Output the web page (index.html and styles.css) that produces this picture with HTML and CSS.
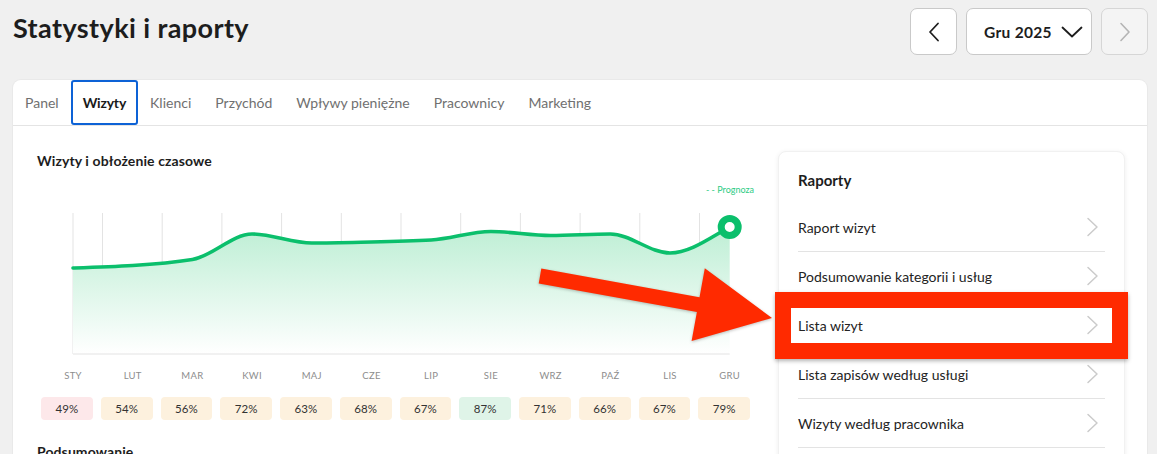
FILE: index.html
```html
<!DOCTYPE html>
<html lang="pl">
<head>
<meta charset="utf-8">
<title>Statystyki i raporty</title>
<link rel="stylesheet" href="styles.css">
</head>
<body>
<div class="page">
  <header class="top">
    <h1 class="title">Statystyki i raporty</h1>
    <div class="period">
      <button class="nav-btn" type="button" aria-label="Poprzedni miesiąc">
        <svg width="12" height="20" viewBox="0 0 12 20"><path d="M10 1.5 L2 10 L10 18.5" fill="none" stroke="#1d1d1d" stroke-width="1.8" stroke-linecap="round" stroke-linejoin="round"/></svg>
      </button>
      <button class="month-btn" type="button">
        <span>Gru 2025</span>
        <svg width="22" height="12" viewBox="0 0 22 12"><path d="M1.5 1.5 L11 10.5 L20.5 1.5" fill="none" stroke="#1d1d1d" stroke-width="1.8" stroke-linecap="round" stroke-linejoin="round"/></svg>
      </button>
      <button class="nav-btn is-disabled" type="button" aria-label="Następny miesiąc" disabled>
        <svg width="12" height="20" viewBox="0 0 12 20"><path d="M2 1.5 L10 10 L2 18.5" fill="none" stroke="#b4b4b4" stroke-width="1.6" stroke-linecap="round" stroke-linejoin="round"/></svg>
      </button>
    </div>
  </header>

  <section class="board">
    <nav class="tabs">
      <a class="tab">Panel</a>
      <a class="tab is-active">Wizyty</a>
      <a class="tab">Klienci</a>
      <a class="tab">Przychód</a>
      <a class="tab">Wpływy pieniężne</a>
      <a class="tab">Pracownicy</a>
      <a class="tab">Marketing</a>
    </nav>

    <div class="board-body">
      <div class="visits">
        <h2 class="section-title">Wizyty i obłożenie czasowe</h2>

        <svg class="chart" width="723" height="205" viewBox="37 180 723 205">
          <defs>
            <linearGradient id="areaFill" gradientUnits="userSpaceOnUse" x1="0" y1="226" x2="0" y2="354">
              <stop offset="0" stop-color="#bdeed4"/>
              <stop offset="1" stop-color="#ffffff"/>
            </linearGradient>
          </defs>
          <text class="legend" x="754" y="193" text-anchor="end">- - Prognoza</text>

          <g class="grid">
            <line x1="73" y1="213" x2="73" y2="354"/>
            <line x1="102.5" y1="213" x2="102.5" y2="354"/>
            <line x1="162.2" y1="213" x2="162.2" y2="354"/>
            <line x1="221.9" y1="213" x2="221.9" y2="354"/>
            <line x1="281.6" y1="213" x2="281.6" y2="354"/>
            <line x1="341.3" y1="213" x2="341.3" y2="354"/>
            <line x1="401" y1="213" x2="401" y2="354"/>
            <line x1="460.7" y1="213" x2="460.7" y2="354"/>
            <line x1="520.4" y1="213" x2="520.4" y2="354"/>
            <line x1="580.1" y1="213" x2="580.1" y2="354"/>
            <line x1="639.8" y1="213" x2="639.8" y2="354"/>
            <line x1="699.5" y1="213" x2="699.5" y2="354"/>
          </g>

          <path class="area" d="M73,268 C92.9,267.33 112.8,266.67 132.7,265.5 C152.6,264.33 172.5,262.73 192.4,259.5 C212.3,256.27 232.2,234 252.1,234 C272,234 291.9,243 311.8,243 C331.7,243 351.6,242.44 371.5,242 C391.4,241.56 411.3,241.08 431.2,240 C451.1,238.92 471,231.5 490.9,231.5 C510.8,231.5 530.7,235.5 550.6,235.5 C570.5,235.5 590.4,234 610.3,234 C630.2,234 650.1,253 670,253 C689.9,253 709.8,238 729.7,227 L729.7,354 L73,354 Z"/>
          <line class="axis" x1="73" y1="354" x2="729.7" y2="354"/>
          <path class="line" d="M73,268 C92.9,267.33 112.8,266.67 132.7,265.5 C152.6,264.33 172.5,262.73 192.4,259.5 C212.3,256.27 232.2,234 252.1,234 C272,234 291.9,243 311.8,243 C331.7,243 351.6,242.44 371.5,242 C391.4,241.56 411.3,241.08 431.2,240 C451.1,238.92 471,231.5 490.9,231.5 C510.8,231.5 530.7,235.5 550.6,235.5 C570.5,235.5 590.4,234 610.3,234 C630.2,234 650.1,253 670,253 C689.9,253 709.8,238 729.7,227"/>
          <circle class="dot" cx="729.7" cy="227" r="8.5"/>

          <g class="months" text-anchor="middle">
            <text x="73" y="378.5">STY</text>
            <text x="132.7" y="378.5">LUT</text>
            <text x="192.4" y="378.5">MAR</text>
            <text x="252.1" y="378.5">KWI</text>
            <text x="311.8" y="378.5">MAJ</text>
            <text x="371.5" y="378.5">CZE</text>
            <text x="431.2" y="378.5">LIP</text>
            <text x="490.9" y="378.5">SIE</text>
            <text x="550.6" y="378.5">WRZ</text>
            <text x="610.3" y="378.5">PAŹ</text>
            <text x="670" y="378.5">LIS</text>
            <text x="729.7" y="378.5">GRU</text>
          </g>
        </svg>

        <div class="occupancy">
          <span class="chip is-low">49%</span>
          <span class="chip">54%</span>
          <span class="chip">56%</span>
          <span class="chip">72%</span>
          <span class="chip">63%</span>
          <span class="chip">68%</span>
          <span class="chip">67%</span>
          <span class="chip is-high">87%</span>
          <span class="chip">71%</span>
          <span class="chip">66%</span>
          <span class="chip">67%</span>
          <span class="chip">79%</span>
        </div>

        <h2 class="section-title summary">Podsumowanie</h2>
      </div>

      <aside class="reports">
        <h3 class="reports-title">Raporty</h3>
        <ul class="report-list">
          <li class="report-item"><span>Raport wizyt</span><svg width="13" height="20" viewBox="0 0 13 20"><path d="M2 1.5 L11 10 L2 18.5" fill="none" stroke="#cbcbcb" stroke-width="1.5" stroke-linecap="round" stroke-linejoin="round"/></svg></li>
          <li class="report-item"><span>Podsumowanie kategorii i usług</span><svg width="13" height="20" viewBox="0 0 13 20"><path d="M2 1.5 L11 10 L2 18.5" fill="none" stroke="#cbcbcb" stroke-width="1.5" stroke-linecap="round" stroke-linejoin="round"/></svg></li>
          <li class="report-item"><span>Lista wizyt</span><svg width="13" height="20" viewBox="0 0 13 20"><path d="M2 1.5 L11 10 L2 18.5" fill="none" stroke="#cbcbcb" stroke-width="1.5" stroke-linecap="round" stroke-linejoin="round"/></svg></li>
          <li class="report-item"><span>Lista zapisów według usługi</span><svg width="13" height="20" viewBox="0 0 13 20"><path d="M2 1.5 L11 10 L2 18.5" fill="none" stroke="#cbcbcb" stroke-width="1.5" stroke-linecap="round" stroke-linejoin="round"/></svg></li>
          <li class="report-item"><span>Wizyty według pracownika</span><svg width="13" height="20" viewBox="0 0 13 20"><path d="M2 1.5 L11 10 L2 18.5" fill="none" stroke="#cbcbcb" stroke-width="1.5" stroke-linecap="round" stroke-linejoin="round"/></svg></li>
        </ul>
      </aside>
    </div>
  </section>
</div>

<!-- highlight annotation laid over the report list -->
<div class="callout-box"></div>
<svg class="callout-arrow" width="1157" height="454" viewBox="0 0 1157 454">
  <polygon points="541.3,268.6 699.5,297.2 704.8,268.2 772,318 691.6,341 696.9,312 538.7,283.4"/>
</svg>
</body>
</html>
```

FILE: styles.css
```css
* {
  box-sizing: border-box;
}

html,
body {
  margin: 0;
  height: 100%;
}

body {
  background: #f0f0f0;
  font-family: "Lato", "Open Sans", "Liberation Sans", sans-serif;
  color: #1d1d1d;
  overflow: hidden;
  position: relative;
}

.page {
  padding: 8px 9px 0 13px;
}

/* ---------- header ---------- */
.top {
  display: flex;
  justify-content: space-between;
  align-items: flex-start;
  height: 47px;
}

.title {
  margin: 4px 0 0;
  font-size: 27px;
  line-height: 32px;
  font-weight: 700;
  letter-spacing: 0.4px;
}

.period {
  display: flex;
  gap: 9px;
}

.nav-btn,
.month-btn {
  height: 47px;
  border: 1px solid #c9c9c9;
  border-radius: 7px;
  background: #fff;
  padding: 0;
  display: flex;
  align-items: center;
  justify-content: center;
  font-family: inherit;
}

.nav-btn {
  width: 47px;
}

.nav-btn.is-disabled {
  background: #f4f4f4;
  border-color: #d6d6d6;
}

.month-btn {
  width: 126px;
  padding: 0 8px 0 17px;
  justify-content: space-between;
  font-size: 15.5px;
  font-weight: 700;
  letter-spacing: 0.3px;
  color: #1d1d1d;
}

/* ---------- board ---------- */
.board {
  margin: 25px 1px 0 0;
  background: #fff;
  border-radius: 8px;
  box-shadow: 0 0 0 1px #e9e9e9;
  height: 420px;
}

.tabs {
  display: flex;
  height: 46px;
  border-bottom: 1px solid #e4e4e4;
}

.tab {
  display: flex;
  align-items: center;
  height: 45px;
  padding: 0 10px;
  border: 2px solid transparent;
  font-size: 14px;
  color: #707070;
  white-space: nowrap;
}

.tab.is-active {
  border-color: #0d62d6;
  border-radius: 3px;
  color: #1a1a1a;
  font-weight: 700;
  letter-spacing: -0.2px;
}

.board-body {
  display: flex;
  gap: 18px;
  padding: 25px 22px 0 24px;
}

.visits {
  flex: 1;
  min-width: 0;
}

.section-title {
  margin: 0;
  font-size: 14px;
  line-height: 20px;
  font-weight: 700;
  letter-spacing: 0.1px;
  color: #1d1d1d;
}

.chart {
  display: block;
  margin-top: 9px;
  overflow: visible;
}

.chart .legend {
  font-size: 9px;
  fill: #2ecb84;
}

.chart .grid line,
.chart .axis {
  stroke: #e3e3e3;
  stroke-width: 1;
}

.chart .area {
  fill: url(#areaFill);
}

.chart .line {
  fill: none;
  stroke: #0bbf6c;
  stroke-width: 3.6;
  stroke-linecap: round;
}

.chart .dot {
  fill: #fff;
  stroke: #0bbf6c;
  stroke-width: 7;
}

.chart .months text {
  font-size: 9.5px;
  fill: #8d8d8d;
  letter-spacing: 0.3px;
}

.occupancy {
  display: grid;
  grid-template-columns: repeat(12, 1fr);
  gap: 8px;
  margin: 12px 10px 0 4px;
}

.chip {
  height: 23px;
  border-radius: 4px;
  background: #fdf1de;
  display: flex;
  align-items: center;
  justify-content: center;
  font-size: 11.5px;
  color: #333;
}

.chip.is-low {
  background: #fde8ea;
}

.chip.is-high {
  background: #dff4e8;
}

.summary {
  margin-top: 22px;
  font-size: 14px;
}

/* ---------- reports card ---------- */
.reports {
  flex: 0 0 347px;
  background: #fff;
  border-radius: 8px;
  box-shadow: 0 1px 5px rgba(0, 0, 0, 0.07);
  border: 1px solid #f1f1f1;
  padding: 17px 19px 0;
  height: 320px;
}

.reports-title {
  margin: 0 0 12px;
  font-size: 15px;
  line-height: 22px;
  font-weight: 700;
}

.report-list {
  list-style: none;
  margin: 0;
  padding: 0;
}

.report-item {
  display: flex;
  align-items: center;
  justify-content: space-between;
  height: 49px;
  border-bottom: 1px solid #e3e3e3;
  font-size: 14px;
  color: #232323;
  padding-right: 6px;
}

/* ---------- annotation ---------- */
.callout-box {
  position: absolute;
  left: 775px;
  top: 292px;
  width: 353px;
  height: 67px;
  border: 16px solid #ff2a00;
  box-shadow: 0 2px 4px rgba(0, 0, 0, 0.3);
}

.callout-arrow {
  position: absolute;
  left: 0;
  top: 0;
  pointer-events: none;
}

.callout-arrow polygon {
  fill: #ff2a00;
  filter: drop-shadow(0 1px 1.5px rgba(0, 0, 0, 0.25));
}
```
